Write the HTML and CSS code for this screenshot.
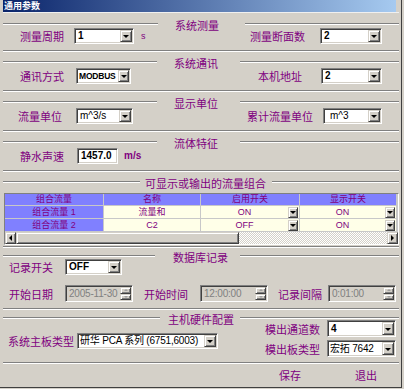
FILE: index.html
```html
<!DOCTYPE html>
<html lang="zh">
<head>
<meta charset="utf-8">
<title>通用参数</title>
<link rel="stylesheet" href="styles.css">
</head>
<body>
<div class="win">
  <div class="titlebar">通用参数</div>
  <div class="hl"></div>

  <section class="sec s1">
    <div class="stitle"><i class="ln"></i><span class="tt">系统测量</span><i class="ln"></i></div>
    <div class="row">
      <span class="lbl w54">测量周期</span>
      <div class="combo cw60"><span class="val">1</span><span class="dd raised"></span></div>
      <span class="unit">s</span>
      <div class="rgrp">
        <span class="lbl w70">测量断面数</span>
        <div class="combo cw62"><span class="val">2</span><span class="dd raised"></span></div>
      </div>
    </div>
  </section>
  <div class="sep"></div>

  <section class="sec s2">
    <div class="stitle"><i class="ln"></i><span class="tt">系统通讯</span><i class="ln"></i></div>
    <div class="row">
      <span class="lbl w56">通讯方式</span>
      <div class="combo cw55"><span class="val small">MODBUS</span><span class="dd narrow raised"></span></div>
      <div class="rgrp">
        <span class="lbl w63">本机地址</span>
        <div class="combo cw61"><span class="val">2</span><span class="dd raised"></span></div>
      </div>
    </div>
  </section>
  <div class="sep"></div>

  <section class="sec s3">
    <div class="stitle"><i class="ln"></i><span class="tt">显示单位</span><i class="ln"></i></div>
    <div class="row r3">
      <span class="lbl w58">流量单位</span>
      <div class="combo cw57"><span class="val thin">m^3/s</span><span class="dd raised"></span></div>
      <div class="rgrp">
        <span class="lbl w76">累计流量单位</span>
        <div class="combo cw59"><span class="val thin pl">m^3</span><span class="dd raised"></span></div>
      </div>
    </div>
  </section>
  <div class="sep"></div>

  <section class="sec s4">
    <div class="stitle"><i class="ln"></i><span class="tt">流体特征</span><i class="ln"></i></div>
    <div class="row">
      <span class="lbl w57">静水声速</span>
      <div class="combo cw41"><span class="val">1457.0</span></div>
      <span class="unit bold">m/s</span>
    </div>
  </section>
  <div class="sep"></div>

  <section class="sec s5">
    <div class="stitle"><i class="ln"></i><span class="tt">可显示或输出的流量组合</span><i class="ln"></i></div>
    <div class="tbl">
      <div class="grid">
        <div class="hd">组合流量</div>
        <div class="hd">名称</div>
        <div class="hd">启用开关</div>
        <div class="hd">显示开关</div>

        <div class="fx">组合流量 1</div>
        <div class="cell">流量和</div>
        <div class="cell sel"><span class="ct">ON</span><span class="cdd raised"></span></div>
        <div class="cell sel"><span class="ct">ON</span><span class="cdd raised"></span></div>

        <div class="fx">组合流量 2</div>
        <div class="cell">C2</div>
        <div class="cell sel"><span class="ct">OFF</span><span class="cdd raised"></span></div>
        <div class="cell sel"><span class="ct">ON</span><span class="cdd raised"></span></div>
      </div>
      <div class="hscroll">
        <span class="sbtn raised"><i class="al"></i></span>
        <span class="thumb raised"></span>
        <span class="track"></span>
        <span class="sbtn raised"><i class="ar"></i></span>
      </div>
    </div>
  </section>
  <div class="sep"></div>

  <section class="sec s6">
    <div class="stitle"><i class="ln"></i><span class="tt">数据库记录</span><i class="ln"></i></div>
    <div class="row r6a">
      <span class="lbl w56">记录开关</span>
      <div class="combo cw57"><span class="val">OFF</span><span class="dd raised"></span></div>
    </div>
    <div class="row r6b">
      <span class="lbl w56">开始日期</span>
      <div class="picker pw68"><span class="val">2005-11-30</span><span class="spin"><i class="sb raised"><b class="au"></b></i><i class="sb raised"><b class="ad"></b></i></span></div>
      <span class="lbl w56 ml11">开始时间</span>
      <div class="picker pw68"><span class="val">12:00:00</span><span class="spin"><i class="sb raised"><b class="au"></b></i><i class="sb raised"><b class="ad"></b></i></span></div>
      <span class="lbl w50 ml10">记录间隔</span>
      <div class="picker pw68"><span class="val">0:01:00</span><span class="spin"><i class="sb raised"><b class="au"></b></i><i class="sb raised"><b class="ad"></b></i></span></div>
    </div>
  </section>
  <div class="sep"></div>

  <section class="sec s7">
    <div class="stitle"><i class="ln"></i><span class="tt">主机硬件配置</span><i class="ln"></i></div>
    <div class="hw">
      <div class="hwl">
        <span class="lbl w69">系统主板类型</span>
        <div class="combo cw141"><span class="val cjk">研华 PCA 系列 (6751,6003)</span><span class="dd raised"></span></div>
      </div>
      <div class="hwr">
        <div class="hrow">
          <span class="lbl w62">模出通道数</span>
          <div class="combo cw69 h17"><span class="val">4</span><span class="dd raised"></span></div>
        </div>
        <div class="hrow">
          <span class="lbl w62">模出板类型</span>
          <div class="combo cw69 h17"><span class="val cjk">宏拓 7642</span><span class="dd raised"></span></div>
        </div>
      </div>
    </div>
  </section>
  <div class="sep"></div>

  <div class="btns">
    <button class="btn">保存</button>
    <button class="btn">退出</button>
  </div>
</div>
</body>
</html>
```

FILE: styles.css
```css
* { box-sizing: border-box; }

body {
  margin: 0;
  background: #d4d0c8;
  font-family: "Noto Sans CJK SC", sans-serif;
}

.win {
  width: 402px;
  height: 388px;
  padding: 0 2px 0 3px;
  background: #d4d0c8;
  border-right: 1px solid #404040;
  border-bottom: 1px solid #404040;
}

.titlebar {
  width: 393px;
  height: 12px;
  padding-left: 1px;
  background: linear-gradient(to right, #0a246a, #a6caf0);
  color: #fff;
  font-weight: bold;
  font-size: 9px;
  line-height: 12px;
}

.hl { height: 1px; background: #f0f0f0; }

.sep {
  height: 2px;
  border-top: 1px solid #808080;
  border-bottom: 1px solid #fff;
}

.sec { padding: 5px 0 6px; }
.s1 { padding-top: 6px; }
.s5 { padding-bottom: 1px; }
.s6 { padding: 3px 0 6px; }
.s7 { padding: 3px 0 5px; }

.stitle {
  display: grid;
  grid-template-columns: var(--l) 1fr var(--r);
  height: 12px;
}
.ln {
  display: block;
  height: 2px;
  margin-top: 4px;
  border-top: 1px solid #808080;
  border-bottom: 1px solid #fff;
}
.tt {
  padding-left: var(--p);
  font-size: 11px;
  line-height: 12px;
  color: #800080;
  white-space: nowrap;
}
.s1 .stitle { --l: 155px; --p: 17px; --r: 154px; }
.s2 .stitle, .s3 .stitle, .s4 .stitle { --l: 154px; --p: 17px; --r: 159px; }
.s5 .stitle { --l: 137px; --p: 5px; --r: 127px; }
.s6 .stitle { --l: 152px; --p: 18px; --r: 159px; }
.s7 .stitle { --l: 157px; --p: 8px; --r: 159px; }

.row {
  display: flex;
  align-items: center;
  height: 16px;
  margin-top: -1px;
  padding: 0 17px;
}
.s1 .row { margin-top: -3px; }
.r3 { padding-left: 15px; }
.r6a { margin-top: -4px; padding-left: 6px; }
.r6b { margin-top: 10px; height: 17px; padding-left: 6px; }

.lbl {
  flex: none;
  font-size: 11px;
  line-height: 12px;
  color: #800080;
  white-space: nowrap;
}
.w50 { width: 50px; }
.w54 { width: 54px; }
.w56 { width: 56px; }
.w57 { width: 57px; }
.w58 { width: 58px; }
.w62 { width: 62px; }
.w63 { width: 63px; }
.w69 { width: 69px; }
.w70 { width: 70px; }
.w76 { width: 76px; }
.ml10 { margin-left: 10px; }
.ml11 { margin-left: 11px; }

.rgrp {
  margin-left: auto;
  display: flex;
  align-items: center;
}

.unit {
  margin-left: 7px;
  font: 9px/12px "Liberation Sans", sans-serif;
  color: #800080;
}
.unit.bold { margin-left: 6px; font-weight: bold; font-size: 10px; }

.combo, .picker {
  flex: none;
  display: flex;
  height: 16px;
  padding: 1px;
  background: #fff;
  border: 1px solid;
  border-color: #808080 #fff #fff #808080;
  box-shadow: inset 1px 1px 0 #404040, inset -1px -1px 0 #d4d0c8;
}
.h17 { height: 17px; }
.h17 .dd { height: 13px; }
.cw41 { width: 41px; }
.cw55 { width: 55px; }
.cw57 { width: 57px; }
.cw59 { width: 59px; }
.cw60 { width: 60px; }
.cw61 { width: 61px; }
.cw62 { width: 62px; }
.cw69 { width: 69px; }
.cw141 { width: 141px; }

.val {
  flex: 1;
  min-width: 0;
  padding-left: 2px;
  font: bold 10px/12px "Liberation Sans", "Noto Sans CJK SC", sans-serif;
  color: #000;
  white-space: nowrap;
  overflow: hidden;
}
.h17 .val { line-height: 13px; }
.val.small { font-size: 8.5px; padding-left: 1px; letter-spacing: -0.2px; }
.val.thin { font-weight: normal; }
.val.pl { padding-left: 5px; }
.val.cjk { font-weight: normal; font-size: 10px; padding-left: 1px; letter-spacing: -0.2px; }

.raised {
  background: #d4d0c8;
  border: 1px solid;
  border-color: #d4d0c8 #404040 #404040 #d4d0c8;
  box-shadow: inset 1px 1px 0 #fff, inset -1px -1px 0 #808080;
}

.dd {
  flex: none;
  width: 12px;
  height: 12px;
  display: flex;
  align-items: center;
  justify-content: center;
}
.dd.narrow { width: 11px; }
.dd::after, .cdd::after {
  content: "";
  border: 3px solid transparent;
  border-top: 3px solid #000;
  border-bottom: 0;
  margin-top: 1px;
}

/* table */
.tbl {
  width: 395px;
  margin: 4px 0 0 1px;
  border: 1px solid;
  border-color: #808080 #fff #fff #808080;
  background: #c8c8c8;
}
.grid {
  display: grid;
  grid-template-columns: 98px 96px 98px 96px;
  grid-template-rows: 11px 12px 12px;
  gap: 1px;
}
.hd, .fx, .cell {
  font: 9px/12px "Liberation Sans", "Noto Sans CJK SC", sans-serif;
  color: #800080;
  text-align: center;
  white-space: nowrap;
}
.hd { background: #8080ff; line-height: 11px; }
.fx { background: #8080ff; }
.cell { background: #ffffe8; }
.cell.sel { display: flex; align-items: center; }
.ct { flex: 1; }
.cdd {
  width: 10px;
  height: 11px;
  margin-right: 1px;
  display: flex;
  align-items: center;
  justify-content: center;
}

.hscroll {
  display: flex;
  height: 12px;
  width: 393px;
  margin-top: 1px;
}
.sbtn {
  width: 11px;
  display: flex;
  align-items: center;
  justify-content: center;
}
.al {
  border: 3px solid transparent;
  border-right: 3px solid #000;
  border-left: 0;
}
.ar {
  border: 3px solid transparent;
  border-left: 3px solid #000;
  border-right: 0;
}
.thumb { width: 223px; }
.track {
  flex: 1;
  background: repeating-conic-gradient(#fff 0 25%, #d4d0c8 0 50%) 0 0 / 2px 2px;
}

/* date pickers */
.picker {
  height: 17px;
  background: #d4d0c8;
}
.pw68 { width: 68px; }
.picker .val {
  font-weight: normal;
  color: #808080;
  line-height: 13px;
  padding-left: 2px;
  letter-spacing: -0.2px;
}
.spin {
  flex: none;
  width: 11px;
  display: flex;
  flex-direction: column;
}
.sb {
  height: 6.5px;
  display: flex;
  align-items: center;
  justify-content: center;
}
.au {
  border: 2px solid transparent;
  border-bottom: 2px solid #a0a0a0;
  border-top: 0;
}
.ad {
  border: 2px solid transparent;
  border-top: 2px solid #a0a0a0;
  border-bottom: 0;
}

/* hardware */
.hw {
  display: flex;
  align-items: flex-start;
  margin-top: -5px;
  padding: 0 3px 0 5px;
}
.hwl {
  display: flex;
  align-items: center;
  margin-top: 13px;
}
.hwr {
  margin-left: auto;
  display: flex;
  flex-direction: column;
  gap: 3px;
}
.hrow {
  display: flex;
  align-items: center;
}

.btns {
  display: flex;
  justify-content: flex-end;
  gap: 16px;
  padding: 4px 3px 0 0;
}
.btn {
  width: 60px;
  padding: 0;
  border: 0;
  background: none;
  font: 11px/14px "Noto Sans CJK SC", sans-serif;
  color: #800080;
}
```
